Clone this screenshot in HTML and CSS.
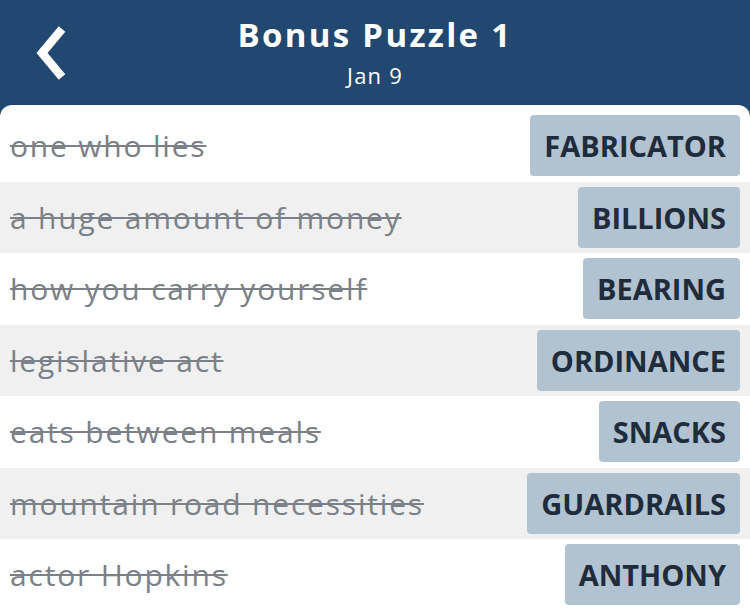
FILE: index.html
```html
<!DOCTYPE html>
<html lang="en">
<head>
    <meta charset="UTF-8">
    <meta name="viewport" content="width=device-width, initial-scale=1.0">
    <title>Bonus Puzzle 1</title>
    <link rel="stylesheet" href="styles.css">
</head>
<body>

<header class="top-bar">
    <a class="back" href="#" aria-label="Back">
        <svg width="40" height="60" viewBox="0 0 40 60">
            <polyline points="29,5 9,29 29,53" fill="none" stroke="#fff" stroke-width="8.5" stroke-linecap="butt" stroke-linejoin="miter"/>
        </svg>
    </a>
    <div class="title-block">
        <h1>Bonus Puzzle 1</h1>
        <p class="date">Jan 9</p>
    </div>
</header>

<!-- Solved clues -->
<main class="card">
    <ul class="clues">
        <li class="clue"><span class="clue-text">one who lies</span><span class="answer">FABRICATOR</span></li>
        <li class="clue"><span class="clue-text">a huge amount of money</span><span class="answer">BILLIONS</span></li>
        <li class="clue"><span class="clue-text">how you carry yourself</span><span class="answer">BEARING</span></li>
        <li class="clue"><span class="clue-text">legislative act</span><span class="answer">ORDINANCE</span></li>
        <li class="clue"><span class="clue-text">eats between meals</span><span class="answer">SNACKS</span></li>
        <li class="clue"><span class="clue-text">mountain road necessities</span><span class="answer">GUARDRAILS</span></li>
        <li class="clue"><span class="clue-text">actor Hopkins</span><span class="answer">ANTHONY</span></li>
    </ul>
</main>

</body>
</html>
```

FILE: styles.css
```css
/* Bonus puzzle screen */
body {
    margin: 0;
    padding: 0;
    background-color: #214870;
    font-family: "Open Sans", Lato, sans-serif;
    overflow: hidden;
}
.top-bar {
    position: relative;
    height: 105px;
    display: flex;
    justify-content: center;
    color: #fff;
}
.back {
    position: absolute;
    left: 33px;
    top: 24px;
    display: block;
}
.title-block {
    text-align: center;
    padding-top: 12px;
}
h1 {
    margin: 0;
    font-size: 33px;
    font-weight: 700;
    letter-spacing: 2.3px;
    line-height: 46px;
}
.date {
    margin: 3px 0 0;
    font-size: 22px;
    letter-spacing: 1.2px;
    line-height: 28px;
}
.card {
    background-color: #fff;
    border-radius: 12px 12px 0 0;
    padding-top: 5px;
    min-height: 506px;
}
.clues {
    list-style-type: none;
    margin: 0;
    padding: 0;
}
.clue {
    height: 71.5px;
    display: flex;
    align-items: center;
    justify-content: space-between;
    padding: 0 10px;
}
.clue:nth-child(even) {
    background-color: #f0f0f0;
}
.clue-text {
    font-size: 30px;
    letter-spacing: 1.8px;
    color: #7c8087;
    text-decoration: line-through;
    text-decoration-thickness: 2px;
}
.answer {
    background-color: #b1c2d1;
    color: #1e2c3c;
    font-weight: 700;
    font-size: 29px;
    height: 61px;
    line-height: 61px;
    padding: 0 14px;
    border-radius: 4px;
}
```
